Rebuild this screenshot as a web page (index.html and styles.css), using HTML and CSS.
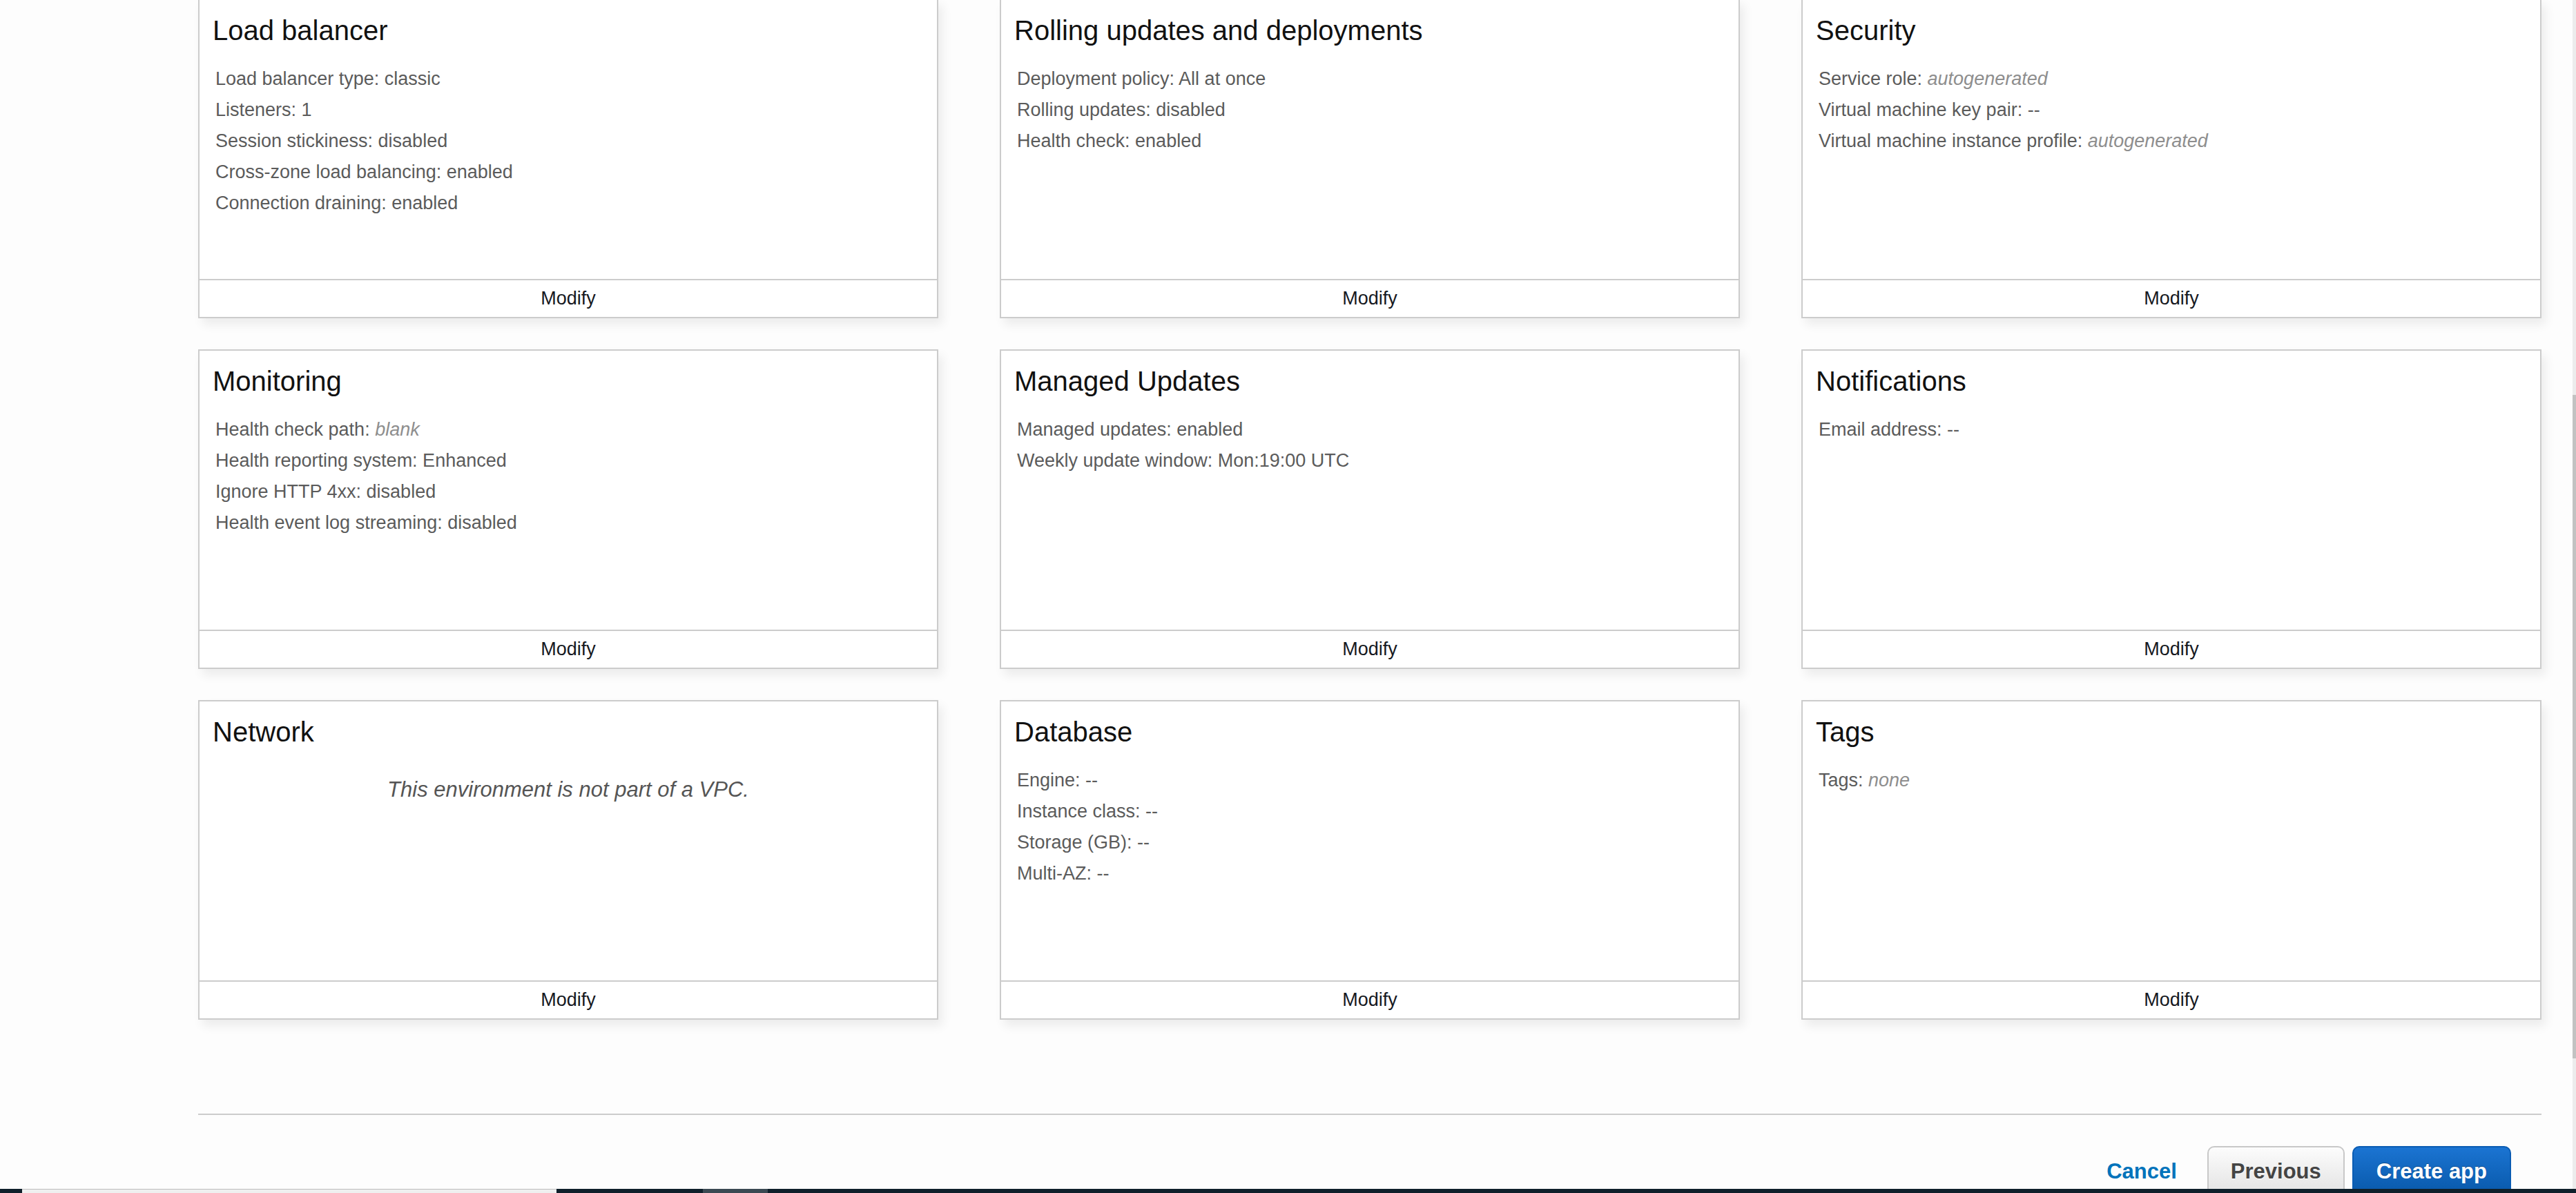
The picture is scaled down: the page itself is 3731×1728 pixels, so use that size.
FILE: index.html
```html
<!DOCTYPE html>
<html lang="en">
<head>
<meta charset="utf-8">
<title>Review configuration</title>
<link rel="stylesheet" href="styles.css">
</head>
<body>
<main class="page">
  <section class="grid">
    <article class="card">
      <div class="card-body">
        <h2 class="card-title">Load balancer</h2>
        <ul class="props">
          <li>Load balancer type: classic</li>
          <li>Listeners: 1</li>
          <li>Session stickiness: disabled</li>
          <li>Cross-zone load balancing: enabled</li>
          <li>Connection draining: enabled</li>
        </ul>
      </div>
      <div class="card-foot">Modify</div>
    </article>
    <article class="card">
      <div class="card-body">
        <h2 class="card-title">Rolling updates and deployments</h2>
        <ul class="props">
          <li>Deployment policy: All at once</li>
          <li>Rolling updates: disabled</li>
          <li>Health check: enabled</li>
        </ul>
      </div>
      <div class="card-foot">Modify</div>
    </article>
    <article class="card">
      <div class="card-body">
        <h2 class="card-title">Security</h2>
        <ul class="props">
          <li>Service role: <em class="muted">autogenerated</em></li>
          <li>Virtual machine key pair: --</li>
          <li>Virtual machine instance profile: <em class="muted">autogenerated</em></li>
        </ul>
      </div>
      <div class="card-foot">Modify</div>
    </article>

    <article class="card">
      <div class="card-body">
        <h2 class="card-title">Monitoring</h2>
        <ul class="props">
          <li>Health check path: <em class="muted">blank</em></li>
          <li>Health reporting system: Enhanced</li>
          <li>Ignore HTTP 4xx: disabled</li>
          <li>Health event log streaming: disabled</li>
        </ul>
      </div>
      <div class="card-foot">Modify</div>
    </article>
    <article class="card">
      <div class="card-body">
        <h2 class="card-title">Managed Updates</h2>
        <ul class="props">
          <li>Managed updates: enabled</li>
          <li>Weekly update window: Mon:19:00 UTC</li>
        </ul>
      </div>
      <div class="card-foot">Modify</div>
    </article>
    <article class="card">
      <div class="card-body">
        <h2 class="card-title">Notifications</h2>
        <ul class="props">
          <li>Email address: --</li>
        </ul>
      </div>
      <div class="card-foot">Modify</div>
    </article>

    <article class="card">
      <div class="card-body">
        <h2 class="card-title">Network</h2>
        <p class="note">This environment is not part of a VPC.</p>
      </div>
      <div class="card-foot">Modify</div>
    </article>
    <article class="card">
      <div class="card-body">
        <h2 class="card-title">Database</h2>
        <ul class="props">
          <li>Engine: --</li>
          <li>Instance class: --</li>
          <li>Storage (GB): --</li>
          <li>Multi-AZ: --</li>
        </ul>
      </div>
      <div class="card-foot">Modify</div>
    </article>
    <article class="card">
      <div class="card-body">
        <h2 class="card-title">Tags</h2>
        <ul class="props">
          <li>Tags: <em class="muted">none</em></li>
        </ul>
      </div>
      <div class="card-foot">Modify</div>
    </article>
  </section>

  <hr class="divider">

  <div class="actions">
    <a class="link-cancel" href="#">Cancel</a>
    <button class="btn btn-secondary" type="button">Previous</button>
    <button class="btn btn-primary" type="button">Create app</button>
  </div>
</main>

<div class="scrollbar"><div class="scroll-thumb"></div></div>

<div class="taskbar">
  <span class="tb-dark tb-start"></span>
  <span class="tb-light"></span>
  <span class="tb-dark tb-mid"></span>
  <span class="tb-grey"></span>
  <span class="tb-dark tb-end"></span>
</div>
</body>
</html>
```

FILE: styles.css
```css
html, body {
  margin: 0;
  padding: 0;
  height: 100%;
  overflow: hidden;
}

body {
  background: #fdfdfd;
  font-family: "Liberation Sans", Arial, sans-serif;
  color: #16191f;
}

.page {
  padding-left: 287px;
  width: 3394px;
}

.grid {
  margin-top: -2px;
  display: grid;
  grid-template-columns: repeat(3, 1072px);
  column-gap: 89px;
  row-gap: 45px;
}

.card {
  display: flex;
  flex-direction: column;
  background: #fff;
  border: 2px solid #cccccc;
  box-shadow: 6px 9px 14px rgba(0, 0, 0, 0.07);
}

.card-body {
  height: 404px;
  padding: 21px 19px 0 19px;
  box-sizing: border-box;
}

.card-title {
  margin: 0;
  font-size: 40px;
  line-height: 46px;
  font-weight: normal;
  color: #111111;
}

.props {
  list-style: none;
  margin: 25px 0 0 0;
  padding: 0 0 0 4px;
  font-size: 27px;
  line-height: 45px;
  color: #5b5b5b;
}

.muted {
  color: #8e8e8e;
  font-style: italic;
}

.note {
  margin: 38px 0 0 0;
  text-align: center;
  font-size: 31px;
  line-height: 45px;
  font-style: italic;
  color: #555555;
}

.card-foot {
  height: 53px;
  border-top: 2px solid #cccccc;
  display: flex;
  align-items: center;
  justify-content: center;
  font-size: 27px;
  color: #16191f;
}

.divider {
  margin: 136px 0 0 0;
  border: 0;
  height: 2px;
  background: #cccccc;
}

.actions {
  margin-top: 45px;
  padding-right: 44px;
  display: flex;
  justify-content: flex-end;
  align-items: center;
}

.link-cancel {
  font-size: 31px;
  font-weight: bold;
  color: #0073bb;
  text-decoration: none;
  margin-right: 44px;
}

.btn {
  font-family: "Liberation Sans", Arial, sans-serif;
  font-size: 31px;
  font-weight: bold;
  height: 74px;
  border-radius: 10px;
  cursor: pointer;
}

.btn-secondary {
  padding: 0 32px;
  color: #444444;
  background: linear-gradient(#fcfcfc, #e2e2e2);
  border: 2px solid #c8c8c8;
  text-shadow: 0 1px 0 #ffffff;
}

.btn-primary {
  margin-left: 11px;
  padding: 0 33px;
  color: #ffffff;
  background: linear-gradient(#1b74d2, #0858a9);
  border: 2px solid #0a5cb3;
  text-shadow: 0 -1px 0 rgba(0, 0, 0, 0.3);
}

.scrollbar {
  position: fixed;
  top: 0;
  right: 0;
  width: 5px;
  height: 100%;
  background: #ececec;
}

.scroll-thumb {
  margin-top: 572px;
  height: 961px;
  background: #c2c2c2;
}

.taskbar {
  position: fixed;
  left: 0;
  right: 0;
  bottom: 0;
  height: 6px;
  display: flex;
  background: #0f1f2a;
}

.tb-start { width: 32px; }
.tb-light { width: 774px; background: #efefef; border-top: 1px solid #bdbdbd; box-sizing: border-box; }
.tb-mid { width: 212px; }
.tb-grey { width: 94px; background: #3b4952; }
.tb-end { flex: 1; }
```
